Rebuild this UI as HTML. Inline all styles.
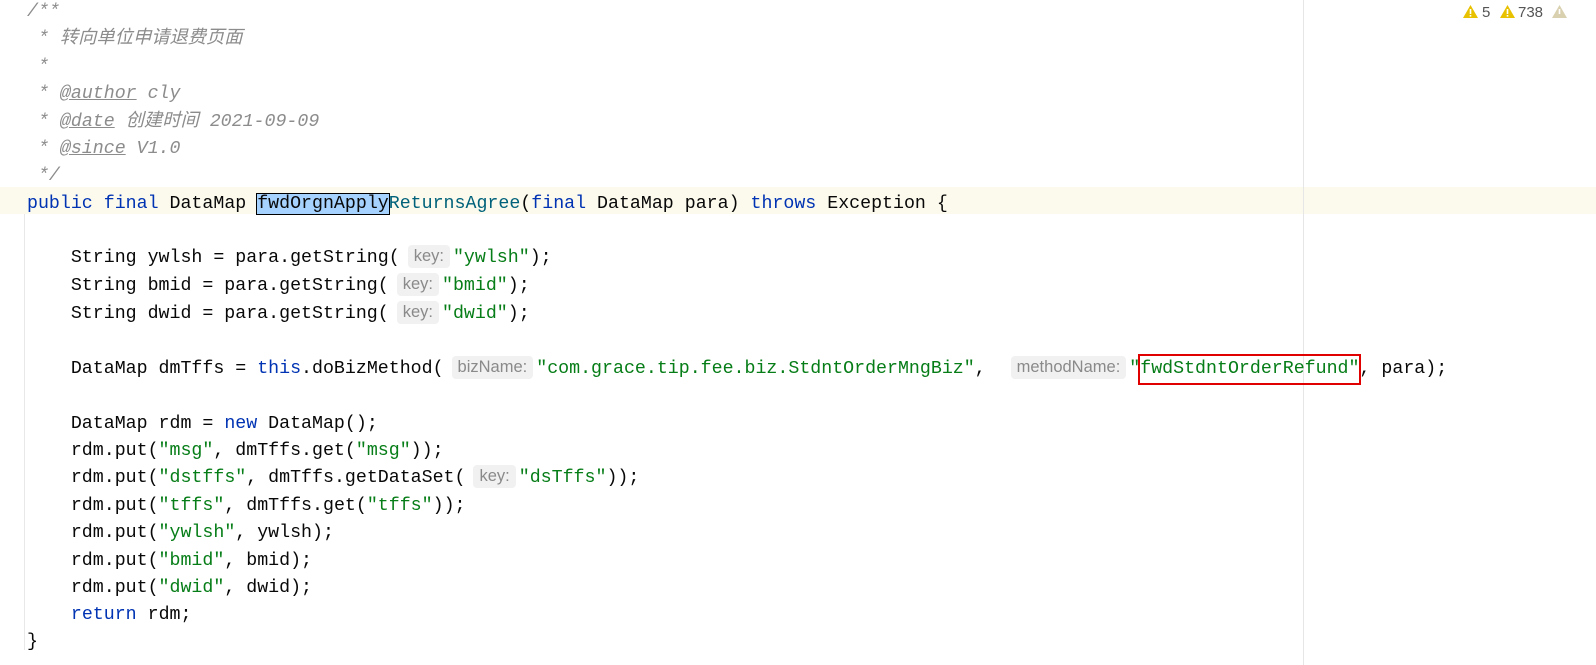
<!DOCTYPE html>
<html><head><meta charset="utf-8"><style>
body{margin:0;width:1596px;height:665px;background:#fff;position:relative;overflow:hidden;font-family:"Liberation Mono",monospace;font-size:18.28px;color:#080808}
.l{position:absolute;left:27px;white-space:pre;height:27px;line-height:27px}
.k{color:#0033b3}.s{color:#067d17}.c{color:#8c8c8c;font-style:italic}.u{text-decoration:underline}.m{color:#00627a}
.cj{font-family:"Liberation Mono","Noto Sans CJK SC",monospace}
.h{display:inline-block;font-family:"Liberation Sans",sans-serif;font-style:normal;font-size:16.5px;color:#8a8a8a;background:#f1f1f1;border-radius:4px;padding:0 6px;line-height:23px;margin:0 3px 0 8px;vertical-align:1px}
.sel{background:#a6d2ff;outline:1px solid #000;}
.rb{position:relative}
.rb::after{content:"";position:absolute;left:-2px;right:-2px;top:-5px;bottom:-6px;border:2px solid #e00000}
.w{position:absolute;top:4px;font-family:'Liberation Sans',sans-serif;font-size:15px;color:#555;line-height:18px}
</style></head><body>
<div style="position:absolute;left:0;top:187px;width:1596px;height:27px;background:#fcfaed"></div>
<div style="position:absolute;left:24px;top:214px;width:1px;height:436px;background:#e8e8e8"></div>
<div style="position:absolute;left:1303px;top:0;width:1px;height:665px;background:#e6e6e6"></div>
<div class="l c" style="top:-1px">/**</div>
<div class="l c cj" style="top:26px"> * 转向单位申请退费页面</div>
<div class="l c" style="top:54px"> *</div>
<div class="l c" style="top:81px"> * <span class="u">@author</span> cly</div>
<div class="l c cj" style="top:109px"> * <span class="u">@date</span> 创建时间 2021-09-09</div>
<div class="l c" style="top:136px"> * <span class="u">@since</span> V1.0</div>
<div class="l c" style="top:163px"> */</div>
<div class="l" style="top:191px"><span class="k">public final</span> DataMap <span class="sel">fwdOrgnApply</span><span class="m">ReturnsAgree</span>(<span class="k">final</span> DataMap para) <span class="k">throws</span> Exception {</div>
<div class="l" style="top:245px">    String ywlsh = para.getString(<span class="h">key:</span><span class="s">"ywlsh"</span>);</div>
<div class="l" style="top:273px">    String bmid = para.getString(<span class="h">key:</span><span class="s">"bmid"</span>);</div>
<div class="l" style="top:301px">    String dwid = para.getString(<span class="h">key:</span><span class="s">"dwid"</span>);</div>
<div class="l" style="top:356px">    DataMap dmTffs = <span class="k">this</span>.doBizMethod(<span class="h">bizName:</span><span class="s">"com.grace.tip.fee.biz.StdntOrderMngBiz"</span>, <span class="h" style="margin-left:14px">methodName:</span><span class="s">"<span class="rb">fwdStdntOrderRefund"</span></span>, para);</div>
<div class="l" style="top:411px">    DataMap rdm = <span class="k">new</span> DataMap();</div>
<div class="l" style="top:438px">    rdm.put(<span class="s">"msg"</span>, dmTffs.get(<span class="s">"msg"</span>));</div>
<div class="l" style="top:465px">    rdm.put(<span class="s">"dstffs"</span>, dmTffs.getDataSet(<span class="h">key:</span><span class="s">"dsTffs"</span>));</div>
<div class="l" style="top:493px">    rdm.put(<span class="s">"tffs"</span>, dmTffs.get(<span class="s">"tffs"</span>));</div>
<div class="l" style="top:520px">    rdm.put(<span class="s">"ywlsh"</span>, ywlsh);</div>
<div class="l" style="top:548px">    rdm.put(<span class="s">"bmid"</span>, bmid);</div>
<div class="l" style="top:575px">    rdm.put(<span class="s">"dwid"</span>, dwid);</div>
<div class="l" style="top:602px">    <span class="k">return</span> rdm;</div>
<div class="l" style="top:629px">}</div>
<svg class="w" style="left:1463px;top:5px" width="15" height="13" viewBox="0 0 15 13"><path d="M7.5 0L15 13H0z" fill="#e8c100"/><rect x="6.7" y="4" width="1.6" height="5" fill="#fff"/><rect x="6.7" y="10" width="1.6" height="1.6" fill="#fff"/></svg>
<div class="w" style="left:1482px">5</div>
<svg class="w" style="left:1500px;top:5px" width="15" height="13" viewBox="0 0 15 13"><path d="M7.5 0L15 13H0z" fill="#e8c100"/><rect x="6.7" y="4" width="1.6" height="5" fill="#fff"/><rect x="6.7" y="10" width="1.6" height="1.6" fill="#fff"/></svg>
<div class="w" style="left:1518px">738</div>
<svg class="w" style="left:1552px;top:5px" width="15" height="13" viewBox="0 0 15 13"><path d="M7.5 0L15 13H0z" fill="#d9d0b0"/><rect x="6.7" y="4" width="1.6" height="5" fill="#fff"/></svg>
</body></html>
